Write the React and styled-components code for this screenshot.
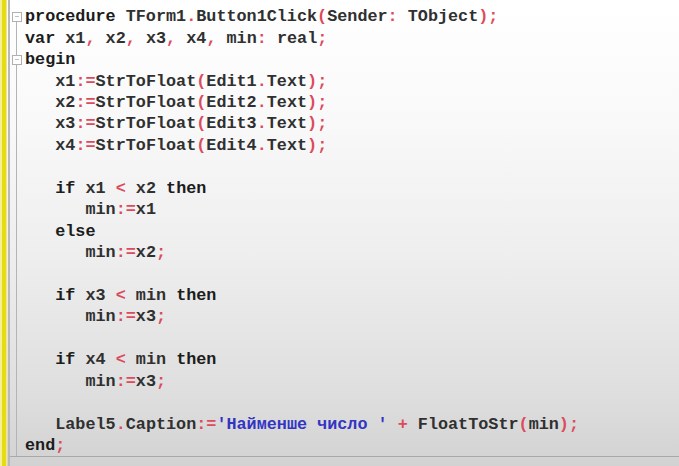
import React from "react";
import styled, { createGlobalStyle } from "styled-components";

const GlobalStyle = createGlobalStyle`
  html, body { margin: 0; padding: 0; }
  body { background: #d4d4d4; overflow: hidden; }
`;

const code = [
  "procedure TForm1.Button1Click(Sender: TObject);",
  "var x1, x2, x3, x4, min: real;",
  "begin",
  "   x1:=StrToFloat(Edit1.Text);",
  "   x2:=StrToFloat(Edit2.Text);",
  "   x3:=StrToFloat(Edit3.Text);",
  "   x4:=StrToFloat(Edit4.Text);",
  "",
  "   if x1 < x2 then",
  "      min:=x1",
  "   else",
  "      min:=x2;",
  "",
  "   if x3 < min then",
  "      min:=x3;",
  "",
  "   if x4 < min then",
  "      min:=x3;",
  "",
  "   Label5.Caption:='Найменше число ' + FloatToStr(min);",
  "end;",
];

const folds = [0, 2];
const keywords = ["procedure", "var", "begin", "if", "then", "else", "end"];

// split a line into words, strings and symbols
function tokenize(line) {
  const out = [];
  const re = /('[^']*')|([A-Za-z_][A-Za-z0-9_]*)|(\s+)|([0-9]+)|(.)/g;
  let m;
  while ((m = re.exec(line))) {
    if (m[1]) out.push({ kind: "str", text: m[1] });
    else if (m[2]) out.push({ kind: keywords.includes(m[2]) ? "kw" : "id", text: m[2] });
    else if (m[3]) out.push({ kind: "ws", text: m[3] });
    else if (m[4]) out.push({ kind: "id", text: m[4] });
    else out.push({ kind: "sym", text: m[5] });
  }
  return out;
}

export default function App() {
  return (
    <>
      <GlobalStyle />
      <Editor>
        <Marker />
        <Divider />
        <Body>
          <Lines>
            {code.map((line, i) => (
              <Row key={i}>
                <Fold first={i === 0}>{folds.includes(i) && <FoldBox />}</Fold>
                <Text>
                  {tokenize(line).map((t, j) => (
                    <Token key={j} kind={t.kind}>{t.text}</Token>
                  ))}
                </Text>
              </Row>
            ))}
          </Lines>
        </Body>
      </Editor>
    </>
  );
}

const Editor = styled.div`
  width: 679px;
  height: 466px;
  display: flex;
  background: linear-gradient(180deg, #ffffff 0%, #f9f9f9 25%, #eeeeee 55%, #dedede 85%, #d2d2d2 100%);
`;

const Marker = styled.div`
  width: 7px;
  flex-shrink: 0;
  background: linear-gradient(90deg, #f4ef9a 0px, #f4ef9a 2px, #e6dc10 2px, #e6dc10 6px, #efe98a 6px);
`;

const Divider = styled.div`
  width: 2px;
  flex-shrink: 0;
  margin-left: 1px;
  background: #b8b8b8;
`;

const Body = styled.div`
  flex: 1;
  padding-top: 6px;
`;

const Lines = styled.div`
  border-bottom: 1px solid #a8a8a8;
`;

const Row = styled.div`
  display: flex;
  height: 21.45px;
  align-items: center;
`;

const Fold = styled.div`
  width: 14px;
  height: 100%;
  flex-shrink: 0;
  display: flex;
  align-items: center;
  justify-content: center;
  margin-left: 1px;
  background: linear-gradient(90deg, transparent 5px, #b4b4b4 5px, #b4b4b4 6px, transparent 6px)
    no-repeat;
  background-position: 0 ${(p) => (p.first ? "11px" : "0")};
`;

const FoldBox = styled.div`
  width: 8px;
  height: 8px;
  margin-left: -2px;
  border: 1px solid #b0b0b0;
  background: #ffffff;
  display: flex;
  align-items: center;
  justify-content: center;
  &::after {
    content: "";
    width: 4px;
    height: 1px;
    background: #c0c0c0;
  }
`;

const Text = styled.div`
  font-family: "Liberation Mono", "Courier New", monospace;
  font-size: 16.8px;
  font-weight: 700;
  white-space: pre;
  color: #2a2a2a;
`;

const tokenColors = {
  kw: "#1c1c1c",
  id: "#303030",
  ws: "inherit",
  sym: "#dc4a5c",
  str: "#3434c4",
};

const Token = styled.span`
  color: ${(p) => tokenColors[p.kind]};
`;
